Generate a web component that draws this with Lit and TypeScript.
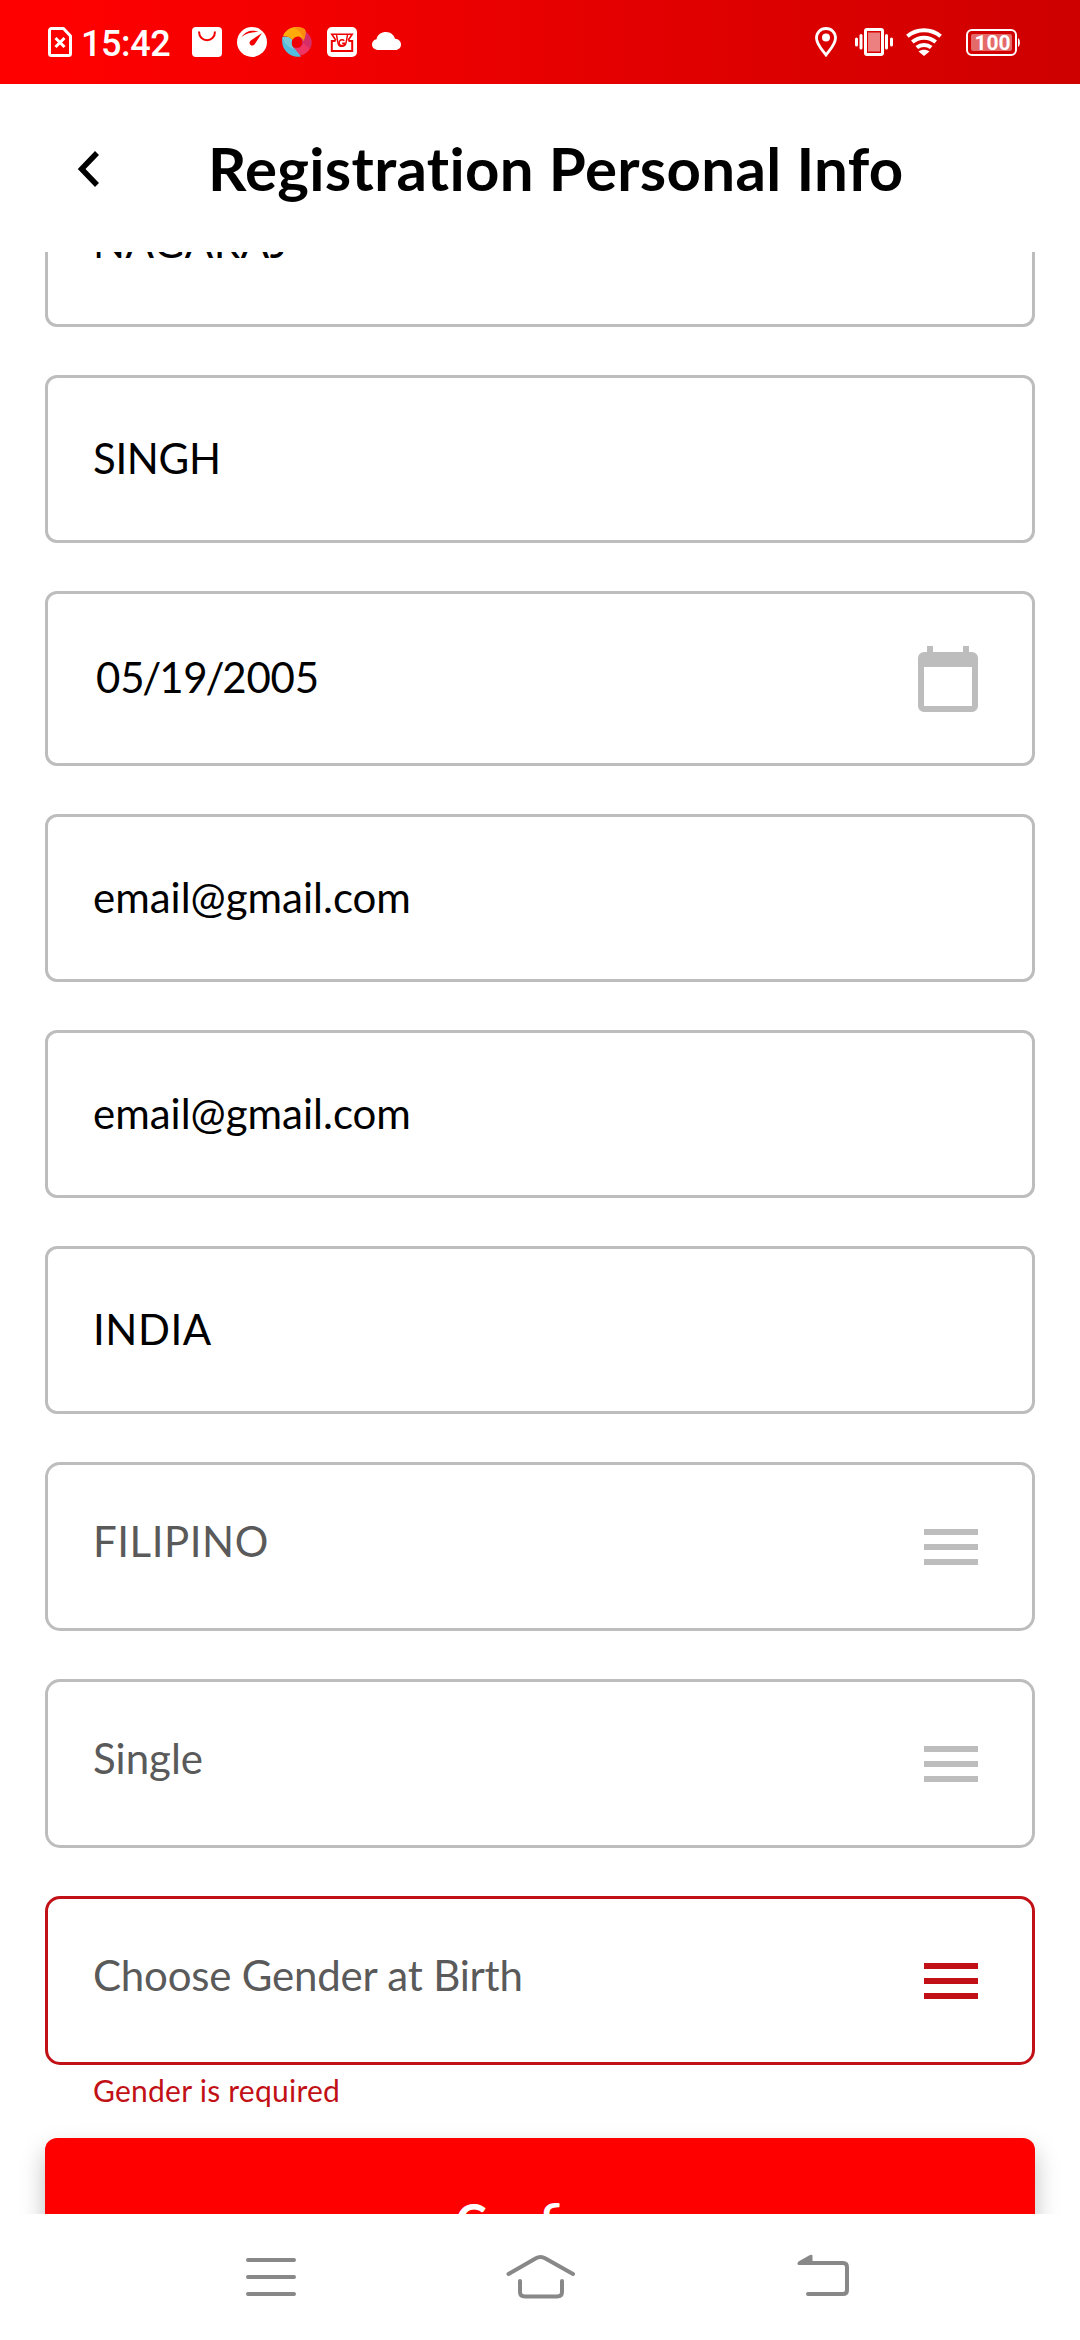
import { LitElement, html, css, svg, nothing } from "lit";
import { customElement, property } from "lit/decorators.js";
import { classMap } from "lit/directives/class-map.js";

type FieldKind = "text" | "date" | "select";
type Tracking = "normal" | "tight" | "snug" | "loose";

interface FieldData {
  value: string;
  kind: FieldKind;
  tracking?: Tracking;
  error?: string;
}

const FIELDS: FieldData[] = [
  { value: "NAGARAJ", kind: "text", tracking: "loose" },
  { value: "SINGH", kind: "text", tracking: "tight" },
  { value: "05/19/2005", kind: "date" },
  { value: "email@gmail.com", kind: "text" },
  { value: "email@gmail.com", kind: "text" },
  { value: "INDIA", kind: "text", tracking: "loose" },
  { value: "FILIPINO", kind: "select", tracking: "loose" },
  { value: "Single", kind: "select" },
  { value: "Choose Gender at Birth", kind: "select", tracking: "snug", error: "Gender is required" },
];

@customElement("status-bar")
export class StatusBar extends LitElement {
  static styles = css`
    :host {
      display: block;
      flex: none;
    }
    .bar {
      box-sizing: border-box;
      height: 84px;
      padding: 0 60px 0 48px;
      display: flex;
      align-items: center;
      justify-content: space-between;
      background: linear-gradient(90deg, #ff0000 4%, #ce0000 100%);
      color: #fff;
      font-family: Roboto, sans-serif;
    }
    .group {
      display: flex;
      align-items: center;
    }
    svg {
      display: block;
      flex: none;
    }
    .time {
      box-sizing: border-box;
      width: 111px;
      margin-left: 9px;
      padding-top: 3px;
      font-size: 36px;
      font-weight: 500;
      line-height: 42px;
      letter-spacing: -0.4px;
      white-space: nowrap;
    }
    .apps {
      display: flex;
      align-items: center;
      gap: 15px;
    }
    .vibrate {
      margin-left: 18px;
    }
    .wifi {
      margin-left: 13px;
    }
    .battery {
      margin-left: 24px;
    }
    .level {
      font: 700 21px Roboto, sans-serif;
    }
  `;

  render() {
    return html`
      <div class="bar">
        <div class="group">
          <svg width="24" height="30" viewBox="0 0 24 30" fill="none" stroke="#fff">
            <path stroke-width="3" stroke-linejoin="round" d="M3.5 1.5H15.5L22.5 9V26.5a2 2 0 0 1-2 2H3.5a2 2 0 0 1-2-2V3.5a2 2 0 0 1 2-2Z" />
            <path stroke-width="3" d="M7.5 11L16.500 20M16.500 11L7.500 20" />
          </svg>
          <span class="time">15:42</span>
          <div class="apps">
            <svg width="30" height="30" viewBox="0 0 30 30">
              <rect width="30" height="30" rx="4" fill="#fff" />
              <path d="M7 4.500C7 16 23 16 23 4.500" fill="none" stroke="#f50000" stroke-width="2" />
            </svg>
            <svg width="30" height="30" viewBox="0 0 30 30">
              <circle cx="15" cy="15" r="15" fill="#fff" />
              <path d="M4.500 10C9 3.500 16 2.500 21.500 5C15.500 5 9.500 6 4.500 10Z" fill="#f30000" />
              <path d="M25 6L17.500 17.500C16 19.500 12.500 18.500 12.500 16C12.500 14.500 13.500 13.500 14.500 13Z" fill="#f30000" />
            </svg>
            <svg width="30" height="30" viewBox="0 0 30 30">
              <path d="M20 2C31 8 32 18 26.500 23.500C23 28 18 30 13 27L12 20C20 20 21 15 18 10Z" fill="#d42d68" />
              <path d="M28 21C25 27 18 30 13 27L12.500 21C17 22 20 20 21.500 16C23 18 25.500 20 28 21Z" fill="#ef3566" />
              <path d="M0.500 10C4 9 8 10 10.500 13C8.500 17 10 20 13 22L19 29.500C7 31.500-2 21 0.500 10Z" fill="#52bddd" />
              <path d="M0.500 10C5 9 8 10 10.500 13C9 17 10 20 13 22C6 21 2 16 0.500 10Z" fill="#78c9da" />
              <path d="M1 9C5-1 17-2 23 2.500C24 5 23.500 9 21.500 14C20 9 14 7.500 10.500 13C8 10 5 9 1 9Z" fill="#ffab0a" />
              <path d="M12 0.400C17-0.500 21 1 23 2.500C24 5 23.500 9 21.500 14C21 8 17 3 12 0.400Z" fill="#fb8c10" />
              <circle cx="15" cy="15.500" r="5.200" fill="#ef0000" />
            </svg>
            <svg width="30" height="30" viewBox="0 0 30 30" fill="none" stroke="#ef0000">
              <rect width="30" height="30" rx="5" fill="#fff" stroke="none" />
              <path stroke-width="2" d="M8.500 14H4.800V24H25.200V14H21.500" />
              <path stroke-width="1.600" d="M9 13.500L4.800 7.300H25.200L21 13.500" />
              <path stroke-width="1.400" d="M9.500 8L11 16C11.800 20.500 18.200 20.500 19 16L20.500 8" />
              <path stroke-width="1.400" d="M17.300 13.800A2.900 2.900 0 1 0 17.900 16.200H15.200" />
            </svg>
            <svg width="30" height="30" viewBox="0 0 30 30">
              <path d="M6.500 23C3 23 0 20.700 0 17.500C0 14.500 2 12.600 4.500 12.200C5.500 7.500 9.500 5 14 5C18.500 5 22 7.800 23 11.800C26.500 12 29 14.300 29 17.500C29 20.700 26.500 23 23.500 23Z" fill="#fff" />
            </svg>
          </div>
        </div>
        <div class="group">
          <svg width="22" height="30" viewBox="0 0 22 30">
            <path d="M11 1.500C5.500 1.500 1.500 5.500 1.500 11C1.500 17.500 7 22.500 11 28C15 22.500 20.500 17.500 20.500 11C20.500 5.500 16.500 1.500 11 1.500Z" fill="none" stroke="#fff" stroke-width="2.800" />
            <circle cx="11" cy="10.500" r="4" fill="#fff" />
          </svg>
          <svg class="vibrate" width="38" height="30" viewBox="0 0 38 30" fill="#fff">
            <rect x="10.500" y="2.500" width="17" height="25" rx="1.500" fill="none" stroke="#fff" stroke-width="3" />
            <rect x="13" y="5.500" width="12" height="19" opacity=".5" />
            <rect x="4.500" y="7" width="3" height="15.500" rx="1.500" />
            <rect x="0" y="10.500" width="3" height="9" rx="1.500" />
            <rect x="30" y="7" width="3" height="15.500" rx="1.500" />
            <rect x="35" y="10.500" width="3" height="9" rx="1.500" />
          </svg>
          <svg class="wifi" width="36" height="30" viewBox="0 0 36 30">
            <g fill="none" stroke="#fff" stroke-width="4">
              <path d="M1.400 9.200C11 1.200 25 1.200 34.600 9.200" />
              <path d="M6.300 15C13 9.300 23 9.300 29.700 15" />
              <path d="M10.800 20.600C15 17 21 17 25.200 20.600" />
            </g>
            <path d="M18 29L12.500 24.500C15.500 22.300 20.500 22.300 23.500 24.500Z" fill="#fff" />
          </svg>
          <svg class="battery" width="54" height="27" viewBox="0 0 54 27">
            <rect x="1" y="1" width="49" height="25" rx="5" fill="none" stroke="#fff" stroke-width="2" />
            <rect x="5" y="5" width="41" height="17" rx="2" fill="#fff" opacity=".42" />
            <path d="M52 9C54.500 10 54.500 17 52 18Z" fill="#fff" />
            <text class="level" x="26.500" y="21" text-anchor="middle" fill="#fff">100</text>
          </svg>
        </div>
      </div>
    `;
  }
}

@customElement("form-field")
export class FormField extends LitElement {
  @property() value = "";
  @property() kind: FieldKind = "text";
  @property() tracking: Tracking = "normal";
  @property() error = "";

  static styles = css`
    :host {
      display: block;
      flex: none;
      font-family: Lato, sans-serif;
    }
    .box {
      box-sizing: border-box;
      height: 168px;
      padding: 0 54px 0 45px;
      border: 3px solid #bdbdbd;
      border-radius: 12px;
      display: flex;
      align-items: center;
      justify-content: space-between;
      color: #000;
      font-size: 42px;
      line-height: 52px;
      white-space: nowrap;
    }
    .value {
      padding-bottom: 3px;
    }
    .tight {
      letter-spacing: -0.35px;
    }
    .snug {
      letter-spacing: -0.2px;
    }
    .loose {
      letter-spacing: 0.55px;
    }
    .date {
      height: 175px;
      padding-left: 48px;
      letter-spacing: -0.2px;
    }
    .slash {
      margin: 0 -2px;
    }
    .select {
      height: 169px;
      border-radius: 15px;
      color: #5a5a5a;
    }
    .select .value {
      padding-bottom: 12px;
    }
    .invalid {
      border-color: #c11116;
    }
    .icon {
      display: block;
      flex: none;
      fill: #bdbdbd;
    }
    .invalid .icon {
      fill: #c11116;
    }
    .message {
      height: 36px;
      margin-top: 7px;
      padding-left: 48px;
      color: #c11116;
      font-size: 30px;
      line-height: 36px;
      letter-spacing: 0.25px;
    }
  `;

  private icon() {
    if (this.kind === "date") {
      return svg`<svg class="icon" width="60" height="66" viewBox="0 0 60 66">
        <path fill-rule="evenodd" d="M9 0H15V6H45V0H51V6H54A6 6 0 0 1 60 12V60A6 6 0 0 1 54 66H6A6 6 0 0 1 0 60V12A6 6 0 0 1 6 6H9ZM6 21V60H54V21Z" />
      </svg>`;
    }
    if (this.kind === "select") {
      return svg`<svg class="icon" width="54" height="36" viewBox="0 0 54 36">
        <path d="M0 0H54V6H0ZM0 15H54V21H0ZM0 30H54V36H0Z" />
      </svg>`;
    }
    return nothing;
  }

  private text() {
    if (this.kind !== "date") return this.value;
    return this.value
      .split("/")
      .map((part, i) => (i ? html`<span class="slash">/</span>${part}` : html`${part}`));
  }

  render() {
    const classes = {
      box: true,
      date: this.kind === "date",
      select: this.kind === "select",
      invalid: this.error !== "",
    };
    const valueClasses = {
      value: true,
      tight: this.tracking === "tight",
      snug: this.tracking === "snug",
      loose: this.tracking === "loose",
    };
    return html`
      <div class=${classMap(classes)}>
        <span class=${classMap(valueClasses)}>${this.text()}</span>
        ${this.icon()}
      </div>
      ${this.error ? html`<div class="message">${this.error}</div>` : nothing}
    `;
  }
}

@customElement("nav-bar")
export class NavBar extends LitElement {
  static styles = css`
    :host {
      display: block;
      flex: none;
    }
    .bar {
      box-sizing: border-box;
      height: 126px;
      padding: 0 231px;
      display: flex;
      align-items: center;
      justify-content: space-between;
      background: #fff;
    }
    svg {
      display: block;
      fill: none;
      stroke: #888;
      stroke-width: 4;
      stroke-linecap: round;
      stroke-linejoin: round;
    }
    .tip {
      fill: #888;
      stroke: none;
    }
  `;

  render() {
    return html`
      <div class="bar">
        <svg width="80" height="60" viewBox="0 0 80 60">
          <path d="M17 13H63M17 30H63M17 47H63" />
        </svg>
        <svg width="80" height="60" viewBox="0 0 80 60">
          <path d="M8.500 27L35.500 11.500Q40.500 8.500 45.500 11.500L73 27" />
          <path d="M20 34V45Q20 49.500 25 49.500H57Q62 49.500 62 45V34" />
        </svg>
        <svg width="80" height="60" viewBox="-9 0 80 60">
          <path d="M31.500 16H65Q69 16 69 20V43Q69 47 65 47H30" />
          <path class="tip" d="M20.500 18C19 17.700 19 16 20.500 14.500L31.500 8.200Q34.500 7 34.500 9V18Z" />
        </svg>
      </div>
    `;
  }
}

@customElement("app-root")
export class AppRoot extends LitElement {
  static styles = css`
    :host {
      display: flex;
      flex-direction: column;
      width: 1080px;
      height: 2340px;
      overflow: hidden;
      background: #fff;
      font-family: Lato, sans-serif;
    }
    .header {
      box-sizing: border-box;
      flex: none;
      height: 168px;
      padding-left: 77px;
      display: flex;
      align-items: center;
      gap: 107px;
    }
    .header svg {
      display: block;
      flex: none;
    }
    .title {
      margin: 0;
      color: #000;
      font-size: 60px;
      font-weight: 700;
      font-variant-ligatures: none;
      letter-spacing: 0.32px;
      line-height: 72px;
      white-space: nowrap;
    }
    .scroll {
      flex: 1;
      min-height: 0;
      overflow: hidden;
    }
    .form {
      display: flex;
      flex-direction: column;
      gap: 48px;
      padding: 0 45px;
      margin-top: -93px;
    }
    .confirm {
      flex: none;
      height: 168px;
      margin-top: -18px;
      padding: 0 0 3px;
      border: 0;
      border-radius: 12px;
      background: #ff0000;
      box-shadow: 0 12px 24px rgba(0, 0, 0, 0.25);
      color: #fff;
      font-family: Lato, sans-serif;
      font-size: 47px;
      font-weight: 700;
      line-height: 58px;
    }
  `;

  render() {
    return html`
      <status-bar></status-bar>
      <header class="header">
        <svg width="24" height="38" viewBox="0 0 24 38" fill="none" stroke="#000" stroke-width="5.500">
          <path d="M20 4L4.600 20L20 36" />
        </svg>
        <h1 class="title">Registration Personal Info</h1>
      </header>
      <main class="scroll">
        <div class="form">
          ${FIELDS.map(
            (f) => html`<form-field
              .value=${f.value}
              .kind=${f.kind}
              .tracking=${f.tracking ?? "normal"}
              .error=${f.error ?? ""}
            ></form-field>`,
          )}
          <button class="confirm">Confirm</button>
        </div>
      </main>
      <nav-bar></nav-bar>
    `;
  }
}
